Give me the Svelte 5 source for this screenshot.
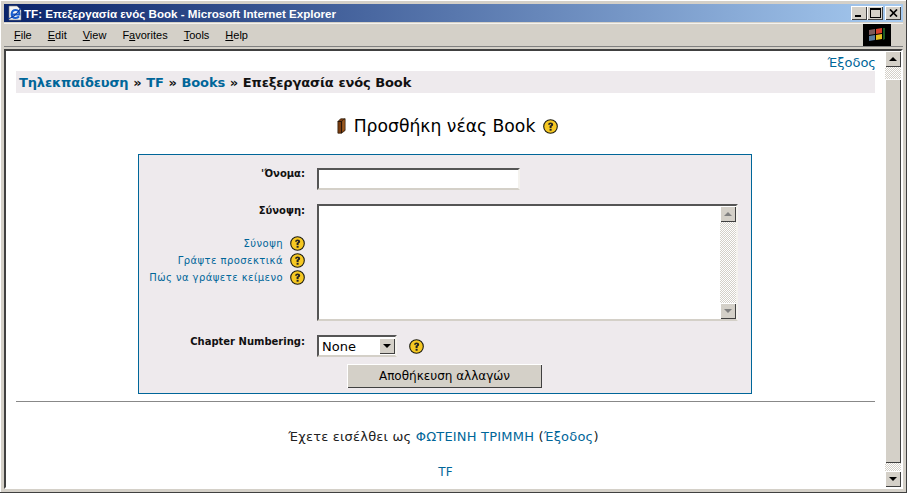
<script>
const menus = [
	["F", "ile"],
	["E", "dit"],
	["V", "iew"],
	["Fa", "vorites", "a"],
	["T", "ools"],
	["H", "elp"]
];
const helpLinks = ["Σύνοψη", "Γράψτε προσεκτικά", "Πώς να γράψετε κείμενο"];
</script>

{#snippet help()}
	<svg class="help" width="15" height="15" viewBox="0 0 15 15">
		<circle cx="7.5" cy="7.5" r="6.8" fill="#f6c822" stroke="#1c1c10" stroke-width="1.1" />
		<path d="M5 5.8 Q5.2 3.4 7.6 3.4 Q10.2 3.4 10.2 5.6 Q10.2 7 8.6 7.6 L8.6 9 L6.6 9 L6.6 6.8 Q8.2 6.6 8.2 5.6 Q8.2 4.9 7.5 4.9 Q6.9 4.9 6.8 5.8 Z" fill="#222" />
		<rect x="6.6" y="9.8" width="2" height="1.9" fill="#222" />
	</svg>
{/snippet}

<div class="window">
	<div class="titlebar">
		<svg class="ie" width="16" height="16" viewBox="0 0 16 16">
			<path d="M2 1h8l4 4v10H2z" fill="#f4f4f4" stroke="#777" stroke-width=".6" />
			<path d="M5 9.5h7.4Q12.6 5 8.8 5Q5 5 4.6 9Q4.4 13 8.6 13Q11 13 12 11.4" fill="none" stroke="#1a5fd0" stroke-width="2" />
			<path d="M1 14 Q8 12 14 3" fill="none" stroke="#0d3a9c" stroke-width="1.2" />
		</svg>
		<span class="title">TF: Επεξεργασία ενός Book - Microsoft Internet Explorer</span>
		<div class="wbtns">
			<div class="wbtn"><i class="min"></i></div>
			<div class="wbtn"><i class="max"></i></div>
			<div class="wbtn close">
				<svg width="9" height="8" viewBox="0 0 9 8"><path d="M1 0.5L8 7.5M8 0.5L1 7.5" stroke="#000" stroke-width="1.7" /></svg>
			</div>
		</div>
	</div>

	<div class="menubar">
		<nav class="menus">
			{#each menus as m}
				{#if m[2]}
					<span>F<u>a</u>vorites</span>
				{:else}
					<span><u>{m[0]}</u>{m[1]}</span>
				{/if}
			{/each}
		</nav>
		<div class="flag">
			<svg width="18" height="16" viewBox="0 0 18 16">
				<path d="M1 3l6-1v5l-6 1z" fill="#7d5a5a" />
				<path d="M1 9l6-1v5l-6 1z" fill="#5a7d9c" />
				<path d="M8 2l6-1v5l-6 1z" fill="#d8402c" />
				<path d="M8 8l6-1v5l-6 1z" fill="#e8c020" />
				<path d="M15 1l2 0v11l-2 1z" fill="#1d5a22" />
			</svg>
		</div>
	</div>

	<div class="client">
		<div class="page">
			<div class="logout"><a href="#x">Έξοδος</a></div>
			<div class="crumbs">
				<a href="#x">Τηλεκπαίδευση</a> » <a href="#x">TF</a> » <a href="#x">Books</a> » Επεξεργασία ενός Book
			</div>
			<h2>
				<svg width="9" height="18" viewBox="0 0 10 18">
					<path d="M1 4L4 1h5v13l-4 3H1z" fill="#7a3c10" stroke="#2a1a0a" stroke-width=".8" />
					<path d="M1 4h4v13M5 4l4-3" fill="none" stroke="#1e1208" stroke-width="1" />
					<path d="M6 3.5L8.4 1.6V13L6 15z" fill="#9a5a20" />
				</svg>
				<span>Προσθήκη νέας Book</span>
				{@render help()}
			</h2>

			<form class="box" onsubmit={(e) => e.preventDefault()}>
				<div class="label name">'Όνομα:</div>
				<input class="field" type="text" />

				<div class="label summary">
					<b>Σύνοψη:</b>
					<div class="links">
						{#each helpLinks as link}
							<div class="hl"><a href="#x">{link}</a>{@render help()}</div>
						{/each}
					</div>
				</div>
				<div class="area field">
					<textarea></textarea>
					<div class="sb small">
						<div class="arrow"><i class="up grey"></i></div>
						<div class="track"></div>
						<div class="arrow"><i class="down grey"></i></div>
					</div>
				</div>

				<div class="label chapter">Chapter Numbering:</div>
				<div class="selrow">
					<div class="select field">
						<span>None</span>
						<div class="arrow"><i class="down"></i></div>
					</div>
					{@render help()}
				</div>

				<div class="submit"><button type="submit">Αποθήκευση αλλαγών</button></div>
			</form>

			<hr />
			<div class="foot">Έχετε εισέλθει ως <a href="#x">ΦΩΤΕΙΝΗ ΤΡΙΜΜΗ</a> (<a href="#x">Έξοδος</a>)</div>
			<div class="foot tf"><a href="#x">TF</a></div>
		</div>
		<div class="sb main">
			<div class="arrow"><i class="up"></i></div>
			<div class="track short"></div>
			<div class="thumb"></div>
			<div class="track short2"></div>
			<div class="arrow"><i class="down"></i></div>
		</div>
	</div>
</div>

<style>
:global(body) {
	margin: 0;
	background: #d4d0c8;
	overflow: hidden;
}
.window {
	width: 907px;
	height: 493px;
	box-sizing: border-box;
	padding: 4px;
	background: #d4d0c8;
	display: flex;
	flex-direction: column;
	font-family: "DejaVu Sans", Verdana, sans-serif;
	box-shadow: inset -1px -1px 0 #404040, inset 1px 1px 0 #fff;
}
.titlebar {
	height: 18px;
	flex: none;
	display: flex;
	align-items: center;
	background: linear-gradient(90deg, #0a246a, #a6caf0);
	padding-left: 3px;
}
.ie { flex: none; margin-right: 1px; }
.title {
	font: bold 11.6px "Liberation Sans", sans-serif;
	color: #fff;
	white-space: nowrap;
}
.wbtns {
	margin-left: auto;
	display: flex;
	padding-right: 2px;
}
.wbtn {
	width: 16px;
	height: 14px;
	box-sizing: border-box;
	background: #d4d0c8;
	box-shadow: inset 1px 1px 0 #fff, inset -1px -1px 0 #404040;
	position: relative;
	display: flex;
	align-items: center;
	justify-content: center;
}
.close { margin-left: 2px; }
.min { position: absolute; left: 4px; bottom: 3px; width: 6px; height: 2px; background: #000; }
.max { width: 9px; height: 7px; border: 1px solid #000; border-top-width: 2px; }

.menubar {
	height: 24px;
	flex: none;
	margin-top: 1px;
	display: flex;
	align-items: center;
	border-top: 1px solid #f4f2ee;
	border-bottom: 1px solid #808080;
	box-sizing: border-box;
	padding-left: 10px;
}
.menus {
	display: flex;
	gap: 16px;
	font: 11px "Liberation Sans", sans-serif;
	color: #000;
}
.flag {
	margin-left: auto;
	margin-right: 12px;
	width: 28px;
	height: 22px;
	background: #000;
	display: flex;
	align-items: center;
	justify-content: center;
}

.client {
	flex: 1;
	min-height: 0;
	margin-top: 2px;
	display: flex;
	border: 2px solid;
	border-color: #404040 #fff #fff #404040;
	background: #fff;
}
.page {
	flex: 1;
	min-width: 0;
	box-sizing: border-box;
	padding: 0 10px;
	font-size: 12px;
	color: #222;
}
a { color: #006699; text-decoration: none; }

.logout {
	text-align: right;
	font-size: 13px;
	line-height: 16px;
	padding-top: 4px;
	margin-right: -1px;
}
.crumbs {
	background: #eeeaed;
	height: 22px;
	line-height: 23px;
	padding-left: 3px;
	font-size: 13px;
	font-weight: bold;
	color: #111;
	letter-spacing: -0.15px;
	word-spacing: 0.4px;
}
h2 {
	margin: 22px 0 0;
	height: 22px;
	padding-left: 4px;
	display: flex;
	align-items: center;
	justify-content: center;
	gap: 8px;
	font-size: 17.2px;
	font-weight: normal;
	color: #000;
}
.box {
	margin: 17px 123px 0 122px;
	height: 240px;
	box-sizing: border-box;
	border: 1px solid #006699;
	background: #eeeaed;
	display: grid;
	grid-template-columns: 166px 1fr;
	column-gap: 12px;
	grid-template-rows: 36px 131px 29px 1fr;
	padding-top: 13px;
}
.label {
	text-align: right;
	font-size: 10px;
	font-weight: bold;
	color: #111;
}
.label.name, .label.chapter { white-space: nowrap; }
.label.summary, .label.chapter { padding-top: 1px; }
.links {
	margin-top: 20px;
	font-weight: normal;
	letter-spacing: 0.45px;
	display: flex;
	flex-direction: column;
	gap: 2px;
}
.hl {
	display: flex;
	justify-content: flex-end;
	align-items: center;
	gap: 7px;
	height: 15px;
}
.field {
	box-sizing: border-box;
	border: 2px solid;
	border-color: #555 #f4f2ee #d4d0c8 #555;
	background: #fff;
	outline: none;
	margin: 0;
	padding: 0;
	border-radius: 0;
}
input.field { width: 203px; height: 22px; }
.area {
	width: 421px;
	height: 117px;
	display: flex;
}
textarea {
	flex: 1;
	min-width: 0;
	border: 0;
	padding: 0;
	margin: 0;
	resize: none;
	outline: none;
}
.sb { flex: none; display: flex; flex-direction: column; }
.sb.small { width: 16px; }
.sb.main { width: 16px; }
.arrow {
	width: 16px;
	height: 16px;
	flex: none;
	box-sizing: border-box;
	background: #d4d0c8;
	box-shadow: inset 1px 1px 0 #fff, inset -1px -1px 0 #404040;
	display: flex;
	align-items: center;
	justify-content: center;
}
i.up, i.down {
	width: 0;
	height: 0;
	border-left: 4px solid transparent;
	border-right: 4px solid transparent;
}
i.up { border-bottom: 4px solid #000; }
i.down { border-top: 4px solid #000; }
i.up.grey { border-bottom-color: #808080; }
i.down.grey { border-top-color: #808080; }
.track {
	flex: 1;
	background-color: #fff;
	background-image: repeating-conic-gradient(#d4d0c8 0 25%, #fff 0 50%);
	background-size: 2px 2px;
}
.track.short { flex: 0 0 12px; }
.track.short2 { flex: 0 0 8px; }
.thumb {
	flex: 1;
	background: #d4d0c8;
	box-shadow: inset 1px 1px 0 #fff, inset -1px -1px 0 #404040;
}
.selrow {
	display: flex;
	align-items: center;
	gap: 12px;
	height: 22px;
}
.select {
	width: 80px;
	height: 22px;
	display: flex;
	align-items: center;
	justify-content: space-between;
	font-size: 13px;
	color: #000;
	padding-left: 3px;
}
.submit {
	grid-column: 1 / 3;
	display: flex;
	padding-left: 208px;
}
button {
	width: 195px;
	height: 24px;
	padding: 0;
	border: 0;
	background: #d4d0c8;
	box-shadow: inset 1px 1px 0 #fff, inset -1px -1px 0 #404040;
	font: 12px "DejaVu Sans", sans-serif;
	color: #000;
}
hr {
	margin: 7px 0 0;
	border: 0;
	height: 1px;
	background: #888;
}
.foot {
	text-align: center;
	margin-top: 27px;
	padding-right: 4px;
	line-height: 16px;
	font-size: 13px;
	letter-spacing: 0.2px;
}
.foot.tf { margin-top: 19px; padding-right: 0; font-size: 12px; }
.help { flex: none; display: block; }
</style>
